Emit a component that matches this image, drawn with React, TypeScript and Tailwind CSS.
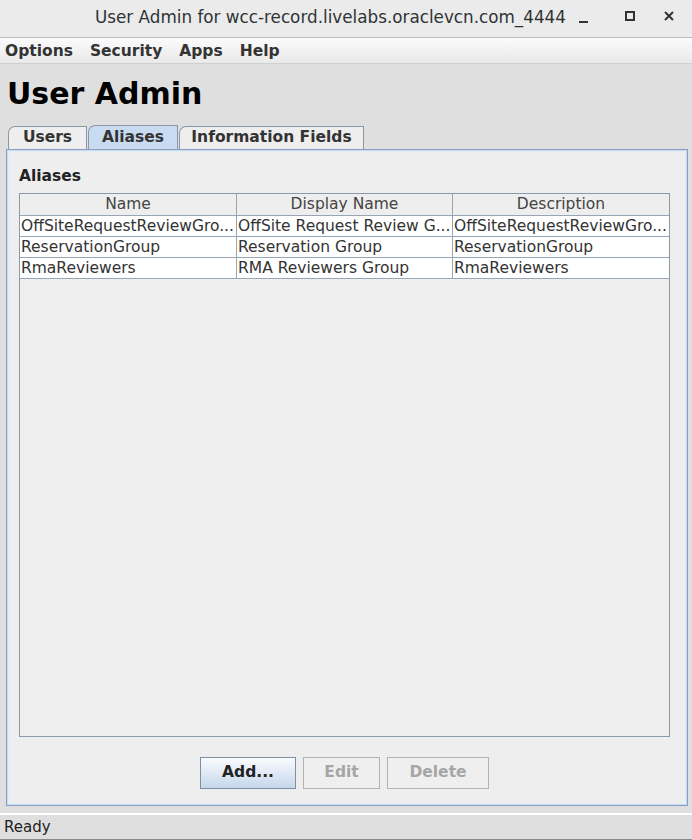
import React from "react";

const rows = [
  ["OffSiteRequestReviewGro...", "OffSite Request Review G...", "OffSiteRequestReviewGro..."],
  ["ReservationGroup", "Reservation Group", "ReservationGroup"],
  ["RmaReviewers", "RMA Reviewers Group", "RmaReviewers"],
];

export default function App() {
  return (
    <div
      className="w-[692px] h-[840px] bg-[#dfdfdf] flex flex-col text-[#1a1a1a] overflow-hidden"
      style={{ fontFamily: '"DejaVu Sans", sans-serif' }}
    >
      {/* Title bar */}
      <div className="h-[38px] shrink-0 bg-[#ebebeb] border-b border-[#bdbdbd] flex items-center relative">
        <div className="absolute left-[95px] top-[5px] text-[16.8px] text-[#2e3436]">
          User Admin for wcc-record.livelabs.oraclevcn.com_4444
        </div>
        <div className="absolute left-[579px] top-[21px] w-[9px] h-[2px] bg-[#2e3436]" />
        <div className="absolute left-[625px] top-[11px] w-[10px] h-[10px] border-[2px] border-[#2e3436]" />
        <svg className="absolute left-[664px] top-[11px]" width="10" height="10" viewBox="0 0 10 10">
          <path d="M1 1 L9 9 M9 1 L1 9" stroke="#2e3436" strokeWidth="2" />
        </svg>
      </div>

      {/* Menu bar */}
      <div className="h-[26px] shrink-0 bg-gradient-to-b from-[#fbfbfb] to-[#e9e9e9] border-b border-[#d0d0d0] flex items-center pl-[5px] pt-[2px] gap-[17px] text-[15.5px] font-bold text-[#333]">
        <span>Options</span>
        <span>Security</span>
        <span>Apps</span>
        <span>Help</span>
      </div>

      {/* Heading */}
      <div className="h-[61px] shrink-0 pl-[7px] pt-[12px] text-[30px] font-bold leading-[36px] text-black">
        User Admin
      </div>

      {/* Tabs */}
      <div className="h-[24px] shrink-0 flex items-end pl-[8px] text-[15.5px] font-bold text-[#333]">
        <div className="h-[23px] w-[79px] flex items-center justify-center bg-[#eeeeee] border border-b-0 border-[#8a97a8] rounded-tl-[7px] mr-[1px]">
          Users
        </div>
        <div className="h-[24px] w-[90px] flex items-center justify-center bg-[#c8dbf1] border border-b-0 border-[#8a97a8] rounded-tl-[7px] mr-[1px]">
          Aliases
        </div>
        <div className="h-[23px] w-[185px] flex items-center justify-center bg-[#eeeeee] border border-b-0 border-[#8a97a8] rounded-tl-[7px]">
          Information Fields
        </div>
      </div>

      {/* Panel */}
      <div className="ml-[6px] w-[682px] h-[657px] shrink-0 border border-[#8a9fbd] bg-[#c8dbf1] p-[1px] flex">
        <div className="flex-1 bg-[#eeeeee] border-[1px] border-[#e4ecf6] flex flex-col pl-[10px] pr-[15px]">
          <div className="h-[41px] shrink-0 pt-[14px] text-[15.5px] font-bold text-[#222] leading-[20px]">
            Aliases
          </div>
          <div className="h-[544px] shrink-0 border border-[#8c99a8] bg-[#efefef] flex flex-col">
            <div className="flex h-[22px] shrink-0 border-b border-[#9aa5b3] bg-[#eeeeee] text-[15.5px] text-[#444]">
              <div className="w-[217px] shrink-0 border-r border-[#9aa5b3] text-center leading-[21px]">Name</div>
              <div className="w-[216px] shrink-0 border-r border-[#9aa5b3] text-center leading-[21px]">Display Name</div>
              <div className="flex-1 text-center leading-[21px]">Description</div>
            </div>
            {rows.map((r, i) => (
              <div key={i} className="flex h-[21px] shrink-0 bg-white border-b border-[#9aa5b3] text-[15.5px] text-[#333]">
                <div className="w-[217px] shrink-0 border-r border-[#9aa5b3] pl-[1px] leading-[20px] whitespace-nowrap overflow-hidden">{r[0]}</div>
                <div className="w-[216px] shrink-0 border-r border-[#9aa5b3] pl-[1px] leading-[20px] whitespace-nowrap overflow-hidden">{r[1]}</div>
                <div className="flex-1 pl-[1px] leading-[20px] whitespace-nowrap overflow-hidden">{r[2]}</div>
              </div>
            ))}
          </div>
          <div className="flex-1 flex items-center justify-center gap-[7px] pt-[6px] pb-[1px] text-[15.5px] font-bold">
            <div className="w-[96px] h-[32px] flex items-center justify-center border border-[#7d8fa5] bg-gradient-to-b from-[#fbfcfe] to-[#c5d6ea] text-[#222]">
              Add...
            </div>
            <div className="w-[77px] h-[32px] flex items-center justify-center border border-[#b3b3b3] bg-[#efefef] text-[#a6a6a6]">
              Edit
            </div>
            <div className="w-[102px] h-[32px] flex items-center justify-center border border-[#b3b3b3] bg-[#efefef] text-[#a6a6a6]">
              Delete
            </div>
          </div>
        </div>
      </div>

      {/* Status bar */}
      <div className="flex-1 flex flex-col pt-[7px]">
        <div className="h-[2px] bg-white shrink-0" />
        <div className="flex-1 border-b-[2px] border-[#888] pl-[4px] text-[15px] leading-[24px] text-[#222]">
          Ready
        </div>
      </div>
    </div>
  );
}
